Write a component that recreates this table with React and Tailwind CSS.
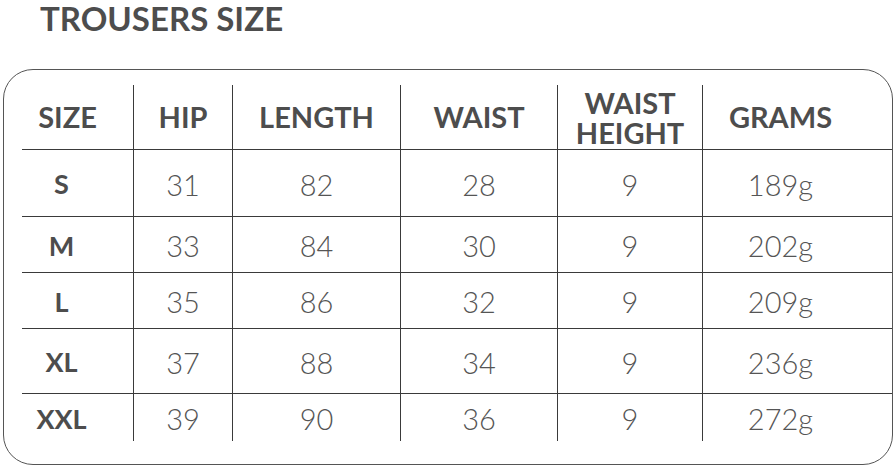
const headers = ["SIZE", "HIP", "LENGTH", "WAIST", "WAIST HEIGHT", "GRAMS"];

const rows = [
  { size: "S", hip: 31, length: 82, waist: 28, wh: 9, grams: "189g", h: "h-[67px]" },
  { size: "M", hip: 33, length: 84, waist: 30, wh: 9, grams: "202g", h: "h-[56px]" },
  { size: "L", hip: 35, length: 86, waist: 32, wh: 9, grams: "209g", h: "h-[56px]" },
  { size: "XL", hip: 37, length: 88, waist: 34, wh: 9, grams: "236g", h: "h-[65px]" },
  { size: "XXL", hip: 39, length: 90, waist: 36, wh: 9, grams: "272g", h: "h-[43px]" },
];

const cols = "grid grid-cols-[111px_99px_168px_157px_145px_156px]";

export default function App() {
  return (
    <div className="w-[896px] h-[468px] bg-white text-[#4d4d4d] font-['Lato','Liberation_Sans',sans-serif] overflow-hidden">
      <div className="h-[69px]">
        <h1 className="pl-[40px] text-[33px] font-bold leading-[36px]">TROUSERS SIZE</h1>
      </div>

      <div className="mx-[3px] h-[396px] border-[1.5px] border-[#555] rounded-[30px] pt-[15px] pl-[18px]">
        <div className={`${cols} h-[65px] border-b border-[#3a3a3a]`}>
          {headers.map((h, i) => (
            <div
              key={h}
              className={`flex items-center justify-center text-center text-[29px] font-bold leading-[30px] ${
                i === 0 ? "pr-5" : "border-l border-[#3a3a3a]"
              } ${i === 4 ? "pt-[2px] text-[28px]" : ""}`}
            >
              {h === "WAIST HEIGHT" ? (
                <span>
                  WAIST
                  <br />
                  HEIGHT
                </span>
              ) : (
                h
              )}
            </div>
          ))}
        </div>

        {rows.map((r, ri) => (
          <div
            key={r.size}
            className={`${cols} ${r.h} ${ri < rows.length - 1 ? "border-b border-[#3a3a3a]" : ""}`}
          >
            <div className="flex items-center justify-center pr-8 pt-[3px] text-[27px] font-bold">{r.size}</div>
            {[r.hip, r.length, r.waist, r.wh, r.grams].map((v, i) => (
              <div
                key={i}
                className="flex items-center justify-center pt-[3px] border-l border-[#3a3a3a] text-[29px] font-light text-[#555]"
              >
                {v}
              </div>
            ))}
          </div>
        ))}
      </div>
    </div>
  );
}
